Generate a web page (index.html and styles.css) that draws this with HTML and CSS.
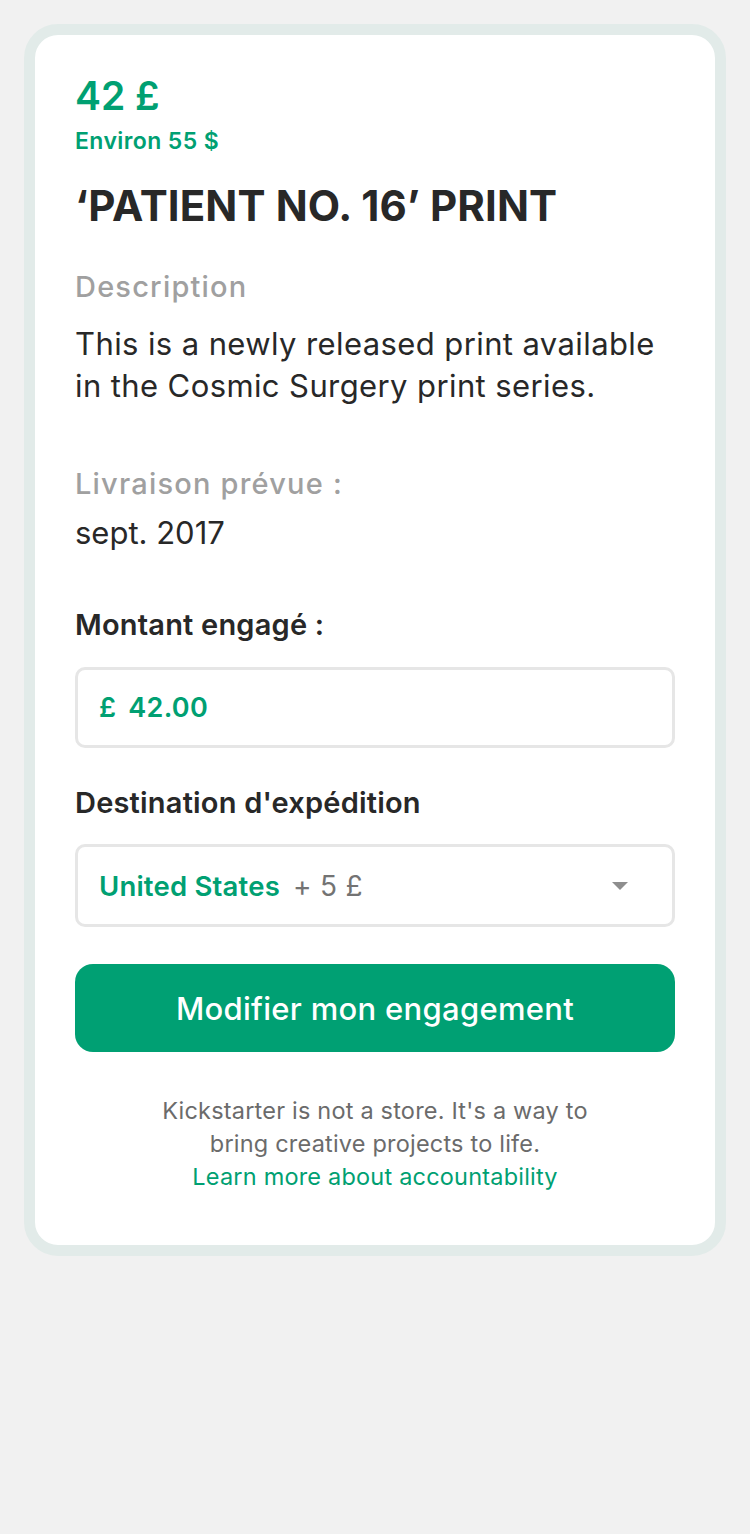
FILE: index.html
```html
<!DOCTYPE html>
<html lang="fr">
<head>
<meta charset="utf-8">
<title>Patient No. 16 Print</title>
<link rel="stylesheet" href="styles.css">
</head>
<body>
<div class="card">
  <div class="price">42 £</div>
  <div class="approx">Environ 55 $</div>
  <h1 class="title">‘PATIENT NO. 16’ PRINT</h1>
  <div class="label">Description</div>
  <p class="desc">This is a newly released print available<br>in the Cosmic Surgery print series.</p>
  <div class="label label-delivery">Livraison prévue :</div>
  <div class="date">sept. 2017</div>
  <div class="field-label field-label-first">Montant engagé :</div>
  <div class="input"><span class="cur">£</span><span class="amount">42.00</span></div>
  <div class="field-label">Destination d'expédition</div>
  <div class="input select">
    <span class="country">United States</span><span class="ship">+ 5 £</span>
    <svg class="caret" width="16" height="8" viewBox="0 0 16 8"><path d="M0 0 H16 L8 8 Z" fill="#8e8e8e"/></svg>
  </div>
  <button class="btn">Modifier mon engagement</button>
  <p class="foot">Kickstarter is not a store. It's a way to<br>bring creative projects to life.<br><span class="link">Learn more about accountability</span></p>
</div>
</body>
</html>
```
FILE: styles.css
```css
html, body { margin: 0; padding: 0; }
body {
  background: #f1f1f1;
  font-family: Inter, "Noto Sans", sans-serif;
  color: #282828;
  padding: 24px;
  min-height: 1534px;
  box-sizing: border-box;
}
.card {
  width: 702px;
  box-sizing: border-box;
  border: 11px solid #e2ebe9;
  border-radius: 34px;
  background: #fff;
  padding: 37px 40px 52px 40px;
}
.price {
  font-size: 39px;
  line-height: 48px;
  font-weight: 600;
  color: #00a072;
}
.approx {
  margin-top: 7px;
  font-size: 23px;
  line-height: 28px;
  font-weight: 600;
  letter-spacing: 0.4px;
  color: #00a072;
}
.title {
  margin: 25px 0 0;
  font-size: 42px;
  line-height: 52px;
  font-weight: 700;
  letter-spacing: 0.1px;
  color: #282828;
}
.label {
  margin-top: 37px;
  font-size: 29px;
  line-height: 36px;
  font-weight: 500;
  letter-spacing: 1.2px;
  color: #a0a0a0;
}
.desc {
  margin: 18px 0 0;
  font-size: 31px;
  line-height: 42px;
  letter-spacing: 0.4px;
  color: #282828;
}
.label-delivery { margin-top: 59px; }
.date {
  margin-top: 13px;
  font-size: 31px;
  line-height: 36px;
}
.field-label {
  margin-top: 37px;
  font-size: 29px;
  line-height: 36px;
  font-weight: 600;
  letter-spacing: 0.2px;
}
.field-label-first { margin-top: 56px; }
.input {
  margin-top: 24px;
  height: 81px;
  box-sizing: border-box;
  border: 3px solid #e6e6e6;
  border-radius: 10px;
  display: flex;
  align-items: center;
  padding: 0 21px;
  font-size: 27px;
  letter-spacing: 0.3px;
}
.cur, .amount { color: #00a072; font-weight: 600; }
.cur { margin-right: 12px; }
.select { margin-top: 23px; height: 83px; }
.country { color: #00a072; font-weight: 600; font-size: 27.5px; letter-spacing: 0.2px; }
.ship { color: #737373; margin-left: 13px; font-size: 28px; }
.caret { margin-left: auto; margin-right: 23px; }
.btn {
  display: block;
  width: 100%;
  margin-top: 37px;
  height: 88px;
  border: none;
  border-radius: 18px;
  background: #00a073;
  color: #fff;
  font-family: inherit;
  font-size: 31px;
  font-weight: 500;
  letter-spacing: 0.3px;
}
.foot {
  margin: 42px 0 0;
  text-align: center;
  font-size: 23.5px;
  line-height: 33px;
  letter-spacing: 0.2px;
  color: #6b6b6b;
}
.link { color: #00a072; }
```
